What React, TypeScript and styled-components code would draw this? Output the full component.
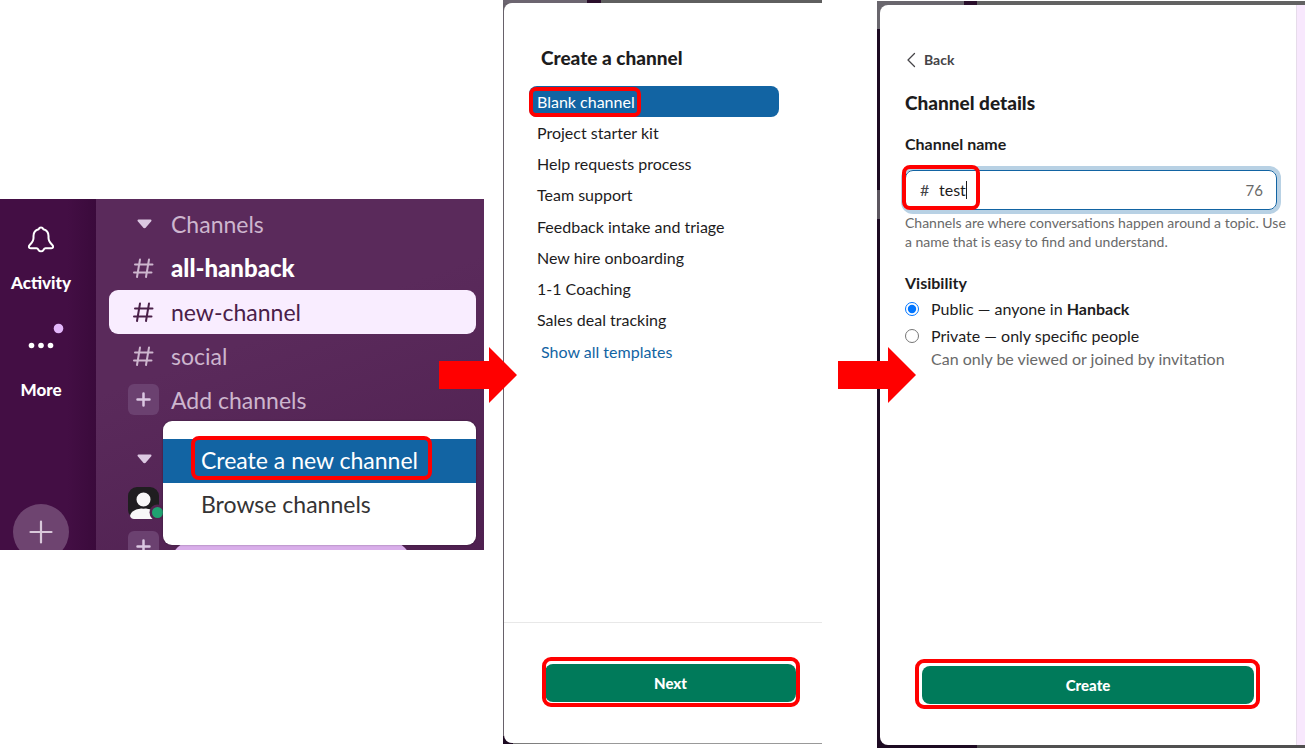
import React from "react";
import styled, { createGlobalStyle, css } from "styled-components";

const GlobalStyle = createGlobalStyle`
  *, *::before, *::after { box-sizing: border-box; }
  body {
    margin: 0;
    background: #fff;
    color: #1d1c1d;
    font-family: Lato, "Liberation Sans", sans-serif;
    font-size: 16px;
    line-height: 22px;
  }
  button, input { font: inherit; color: inherit; }
  button { cursor: pointer; }
  h1, h2, p, ul, fieldset { margin: 0; padding: 0; border: 0; }
  ul { list-style: none; }
`;

const Page = styled.main`
  display: grid;
  grid-template-columns: minmax(0, 484fr) 19px minmax(0, 319fr) 55px minmax(0, 428fr);
  min-height: 100vh;
`;

/* Red annotation frame drawn over a control */
const Callout = styled.span<{ $inset: string; $radius?: number }>`
  position: absolute;
  inset: ${(p) => p.$inset};
  border: 4px solid #f00;
  border-radius: ${(p) => p.$radius ?? 8}px;
  pointer-events: none;
`;

const Connector = styled.div`
  position: relative;
`;

const Arrow = styled.svg<{ $left: number }>`
  position: absolute;
  z-index: 2;
  top: calc(50% - 27px);
  left: ${(p) => p.$left}px;
  width: 78px;
  height: 56px;
`;

const StepArrow = ({ left }: { left: number }) => (
  <Connector>
    <Arrow $left={left} viewBox="0 0 78 56" aria-hidden="true">
      <path d="M0 14H50V0L78 28L50 56V42H0Z" fill="#f00" />
    </Arrow>
  </Connector>
);

/* ---------- Workspace ---------- */

const Workspace = styled.section`
  display: flex;
  align-self: center;
  height: 351px;
  overflow: hidden;
`;

const Rail = styled.nav`
  display: flex;
  flex: none;
  flex-direction: column;
  align-items: center;
  width: 96px;
  padding: 26px 14px 0 0;
  background: linear-gradient(90deg, #430e44 70%, #3a0a3b);
`;

const RailButton = styled.button<{ $gap?: number; $space: number }>`
  display: flex;
  flex-direction: column;
  align-items: center;
  gap: ${(p) => p.$space}px;
  margin-top: ${(p) => p.$gap ?? 0}px;
  padding: 0;
  border: 0;
  background: none;
  color: #fff;
  font-size: 17px;
  font-weight: 900;
`;

const RailIcon = styled.svg`
  display: block;
  width: 38px;
  height: 30px;
  overflow: visible;
`;

const AddButton = styled.button`
  display: flex;
  flex: none;
  align-items: center;
  justify-content: center;
  width: 56px;
  height: 56px;
  margin-top: 103px;
  padding: 0;
  border: 0;
  border-radius: 50%;
  background: #6e4470;
`;

const Sidebar = styled.div`
  flex: 1;
  min-width: 0;
  padding: 3px 8px 0 13px;
  background: linear-gradient(160deg, #5a2a5b 40%, #4f2050);
`;

const SidebarRow = styled.button<{ $active?: boolean; $strong?: boolean }>`
  display: flex;
  align-items: center;
  gap: 12px;
  width: 100%;
  height: 44px;
  padding: 0 19px;
  border: 0;
  border-radius: 9px;
  background: none;
  color: #cdb6ce;
  font-size: 23px;
  line-height: 32px;
  text-align: left;
  white-space: nowrap;
  ${(p) => p.$strong && css`span { color: #fff; font-size: 24px; font-weight: 900; }`}
  ${(p) => p.$active && css`background: #f9edff; color: #4a2049;`}
`;

const RowIcon = styled.svg`
  flex: none;
  width: 31px;
  height: 31px;
`;

const Hash = () => (
  <RowIcon viewBox="0 0 31 31" fill="none" stroke="currentColor" strokeWidth="2" strokeLinecap="round" aria-hidden="true">
    <path d="M12 7.500L9 25M21 7.500L18 25M7 12.500H24.500M6 20.500H23.500" />
  </RowIcon>
);

const CaretDown = () => (
  <RowIcon viewBox="0 0 31 31" aria-hidden="true">
    <path d="M10.500 12.500H22.500L17.300 18.700Q16.500 19.500 15.700 18.700Z" fill="#dcc8e2" stroke="#dcc8e2" strokeWidth="2" strokeLinejoin="round" />
  </RowIcon>
);

const PlusTile = () => (
  <RowIcon viewBox="0 0 31 31" aria-hidden="true">
    <rect width="31" height="31" rx="6" fill="#6b4170" />
    <path d="M15.500 9.500V21.500M9.500 15.500H21.500" stroke="#dcc8e2" strokeWidth="2.500" strokeLinecap="round" />
  </RowIcon>
);

const Avatar = styled.svg`
  flex: none;
  width: 36px;
  height: 32px;
`;

const MenuAnchor = styled.div`
  position: relative;
  margin-bottom: 15px;
`;

const Menu = styled.div`
  position: absolute;
  z-index: 1;
  top: calc(100% - 1px);
  right: 0;
  left: 54px;
  padding: 18px 0;
  border-radius: 9px;
  background: #fff;
  box-shadow: 0 0 2px rgba(0, 0, 0, 0.4);
`;

const MenuItem = styled.button<{ $active?: boolean }>`
  position: relative;
  display: block;
  width: 100%;
  height: 44px;
  padding: 0 38px 2px;
  border: 0;
  background: ${(p) => (p.$active ? "#1264a3" : "#fff")};
  color: ${(p) => (p.$active ? "#fff" : "#343334")};
  font-size: 23px;
  line-height: 32px;
  text-align: left;
  white-space: nowrap;
`;

const UnreadPill = styled.span`
  align-self: flex-start;
  flex: none;
  width: 240px;
  height: 44px;
  margin-top: 16px;
  border-radius: 22px;
  background: #d9aeea;
`;

/* ---------- Dialogs ---------- */

const Backdrop = styled.section<{ $details?: boolean }>`
  display: flex;
  ${(p) =>
    p.$details
      ? css`
          margin-top: 1px;
          padding: 4px 0 3px 3px;
          background:
            linear-gradient(90deg, #69666d 87px, #2a0f2b 87px, #2a0f2b 100px, #626262 100px) top / 100% 4px no-repeat,
            linear-gradient(90deg, #1d0a22 100px, #505050 100px) bottom / 100% 3px no-repeat,
            linear-gradient(#69666d 28px, #1d0a22 28px, #1d0a22 189px, #5c565f 189px, #5c565f 218px, #1d0a22 218px);
        `
      : css`
          margin-bottom: 4px;
          padding: 3px 0 1px 1px;
          background:
            linear-gradient(90deg, #6c6570 84px, #2a0f2b 84px, #2a0f2b 98px, #5f5f5f 98px) top / 100% 3px no-repeat,
            linear-gradient(90deg, #1d0a22 10px, #777 10px, #999 100px) bottom / 100% 8px no-repeat,
            #67616a;
        `}
`;

const Dialog = styled.div<{ $details?: boolean }>`
  display: flex;
  flex: 1;
  flex-direction: column;
  min-width: 0;
  padding-top: ${(p) => (p.$details ? 45 : 43)}px;
  border-radius: 8px 0 0 8px;
  background: #fff;
`;

const Title = styled.h1`
  font-size: 19px;
  font-weight: 900;
  line-height: 24px;
`;

const TemplateArea = styled.div`
  flex: 1;
  padding: 0 43px 0 25px;
  border-bottom: 1px solid #e8e8e8;

  ${Title} { padding-left: 12px; }
`;

const TemplateList = styled.ul`
  display: grid;
  grid-auto-rows: 1fr;
  height: 250px;
  margin-top: 16px;
`;

const Template = styled.button<{ $active?: boolean }>`
  position: relative;
  display: flex;
  align-items: center;
  width: 100%;
  height: 100%;
  padding: 0 8px;
  border: 0;
  border-radius: 8px;
  background: ${(p) => (p.$active ? "#1264a3" : "none")};
  color: ${(p) => (p.$active ? "#fff" : "#1d1c1d")};
  text-align: left;
  white-space: nowrap;
`;

const TemplateLink = styled.a`
  display: inline-block;
  margin: 5px 0 0 12px;
  color: #1264a3;
  text-decoration: none;
`;

const Footer = styled.footer<{ $pad: string }>`
  padding: ${(p) => p.$pad};
`;

const PrimaryButton = styled.button`
  position: relative;
  display: block;
  width: 100%;
  height: 38px;
  padding: 0;
  border: 0;
  border-radius: 8px;
  background: #007a5a;
  color: #fff;
  font-size: 15px;
  font-weight: 900;
`;

const DetailsColumns = styled.div`
  display: flex;
  flex: 1;
  min-width: 0;
`;

const PreviewEdge = styled.div`
  flex: none;
  width: 9px;
  border-left: 1px solid #e6dcea;
  background: #f8e8fd;
`;

const Form = styled.form`
  display: flex;
  flex: 1;
  flex-direction: column;
  align-items: stretch;
  padding: 0 19px 0 25px;
`;

const BackButton = styled.button`
  display: flex;
  align-items: center;
  align-self: flex-start;
  gap: 8px;
  height: 20px;
  margin-bottom: 21px;
  padding: 0 0 0 1px;
  border: 0;
  background: none;
  color: #454447;
  font-size: 14px;
  font-weight: 700;
`;

const FieldLabel = styled.label`
  margin: 18px 0 15px;
  font-weight: 700;
`;

const Field = styled.div`
  position: relative;
  display: flex;
  align-items: center;
  height: 40px;
  padding: 0 13px 0 14px;
  border: 1px solid #1264a3;
  border-radius: 8px;
  box-shadow: 0 0 0 4px #b8d1e4;
`;

const Prefix = styled.span`
  width: 19px;
  color: #454447;
`;

const NameInput = styled.input`
  field-sizing: content;
  padding: 0;
  border: 0;
  outline: 0;
  background: none;
`;

const TextCursor = styled.span`
  width: 1px;
  height: 18px;
  background: #1d1c1d;
`;

const Remaining = styled.span`
  margin-left: auto;
  color: #696969;
  font-size: 15px;
`;

const Hint = styled.p`
  margin: 3px -10px 0 0;
  color: #696969;
  font-size: 14px;
  line-height: 19px;
`;

const Options = styled.fieldset`
  display: grid;
  gap: 5px;
  margin-top: 21px;
`;

const Legend = styled.legend`
  padding: 0 0 4px;
  font-weight: 700;
`;

const Option = styled.label`
  display: flex;
  gap: 12px;

  input {
    flex: none;
    width: 14px;
    height: 14px;
    margin: 4px 0;
    accent-color: #0075ff;
  }
  small {
    display: block;
    color: #696969;
    font-size: 16px;
    line-height: 24px;
  }
`;

const templates = [
  "Blank channel",
  "Project starter kit",
  "Help requests process",
  "Team support",
  "Feedback intake and triage",
  "New hire onboarding",
  "1-1 Coaching",
  "Sales deal tracking",
];

const WorkspaceStep = () => (
  <Workspace>
    <Rail>
      <RailButton $space={17}>
        <RailIcon viewBox="0 0 38 30" fill="none" stroke="#fff" strokeWidth="2" strokeLinecap="round" strokeLinejoin="round" aria-hidden="true">
          <path d="M19 2.500C17.700 2.500 17.100 3.100 16.700 4.200C13.300 5 11.500 7.500 11.500 11V13C11.500 16 9.500 18.200 7.700 20C6.300 21.500 6.700 23.200 8.700 23.200H14.500C15.800 23.200 16 24 16.500 24.900C17.600 26.800 20.400 26.800 21.500 24.900C22 24 22.200 23.200 23.500 23.200H29.300C31.300 23.200 31.700 21.500 30.300 20C28.500 18.200 26.500 16 26.500 13V11C26.500 7.500 24.700 5 21.300 4.200C20.900 3.100 20.300 2.500 19 2.500Z" />
        </RailIcon>
        Activity
      </RailButton>
      <RailButton $gap={28} $space={27}>
        <RailIcon viewBox="0 0 38 30" aria-hidden="true">
          <circle cx="9.500" cy="23.500" r="2.800" fill="#fff" />
          <circle cx="19" cy="23.500" r="2.800" fill="#fff" />
          <circle cx="28.500" cy="23.500" r="2.800" fill="#fff" />
          <circle cx="36.500" cy="6.500" r="4.800" fill="#e3b7fb" />
        </RailIcon>
        <span>More</span>
      </RailButton>
      <AddButton aria-label="Create new">
        <svg width="24" height="24" viewBox="0 0 24 24" stroke="#d9c9da" strokeWidth="2.200" strokeLinecap="round" aria-hidden="true">
          <path d="M12 1.500V22.500M1.500 12H22.500" />
        </svg>
      </AddButton>
    </Rail>
    <Sidebar>
      <SidebarRow><CaretDown /><span>Channels</span></SidebarRow>
      <SidebarRow $strong><Hash /><span>all-hanback</span></SidebarRow>
      <SidebarRow $active><Hash /><span>new-channel</span></SidebarRow>
      <SidebarRow><Hash /><span>social</span></SidebarRow>
      <MenuAnchor>
        <SidebarRow><PlusTile /><span>Add channels</span></SidebarRow>
        <Menu>
          <MenuItem $active>
            Create a new channel
            <Callout $inset="-3px 44px 3px 28px" />
          </MenuItem>
          <MenuItem>Browse channels</MenuItem>
        </Menu>
      </MenuAnchor>
      <SidebarRow aria-label="Direct messages"><CaretDown /></SidebarRow>
      <SidebarRow aria-label="You">
        <Avatar viewBox="0 0 36 32" aria-hidden="true">
          <rect width="31" height="32" rx="9" fill="#1f1e20" />
          <path d="M2 29C3 24 8 21.500 15.500 21.500C23 21.500 28 24 29 29Q28 32 25 32H6Q3 32 2 29Z" fill="#f8f8f8" />
          <circle cx="15.500" cy="12.500" r="8" fill="#f8f8f8" stroke="#1f1e20" strokeWidth="2" />
          <circle cx="29.500" cy="25.500" r="8" fill="#52234f" />
          <circle cx="29.500" cy="25.500" r="5.500" fill="#20a271" />
        </Avatar>
      </SidebarRow>
      <SidebarRow aria-label="Add teammates"><PlusTile /><UnreadPill /></SidebarRow>
    </Sidebar>
  </Workspace>
);

const TemplateStep = () => (
  <Backdrop>
    <Dialog>
      <TemplateArea>
        <Title>Create a channel</Title>
        <TemplateList>
          {templates.map((name, i) => (
            <li key={name}>
              <Template $active={i === 0}>
                {name}
                {i === 0 && <Callout $inset="1px 138px 0 0" $radius={7} />}
              </Template>
            </li>
          ))}
        </TemplateList>
        <TemplateLink href="#templates">Show all templates</TemplateLink>
      </TemplateArea>
      <Footer $pad="41px 26px 41px 41px">
        <PrimaryButton>
          Next
          <Callout $inset="-7px -4px -5px -3px" $radius={9} />
        </PrimaryButton>
      </Footer>
    </Dialog>
  </Backdrop>
);

const DetailsStep = () => (
  <Backdrop $details>
    <DetailsColumns>
      <Dialog $details>
        <Form onSubmit={(e) => e.preventDefault()}>
          <BackButton type="button">
            <svg width="10" height="16" viewBox="0 0 10 16" fill="none" stroke="currentColor" strokeWidth="1.300" strokeLinecap="round" strokeLinejoin="round" aria-hidden="true">
              <path d="M8.500 1.500L2 8L8.500 14.500" />
            </svg>
            Back
          </BackButton>
          <Title as="h2">Channel details</Title>
          <FieldLabel htmlFor="channel-name">Channel name</FieldLabel>
          <Field>
            <Prefix>#</Prefix>
            <NameInput id="channel-name" defaultValue="test" />
            <TextCursor />
            <Remaining>76</Remaining>
            <Callout $inset="-6px 296px -1px -4px" />
          </Field>
          <Hint>
            Channels are where conversations happen around a topic. Use a name that is easy to find and understand.
          </Hint>
          <Options>
            <Legend>Visibility</Legend>
            <Option>
              <input type="radio" name="visibility" defaultChecked />
              <span>Public — anyone in <b>Hanback</b></span>
            </Option>
            <Option>
              <input type="radio" name="visibility" />
              <span>Private — only specific people<small>Can only be viewed or joined by invitation</small></span>
            </Option>
          </Options>
        </Form>
        <Footer $pad="0 42px 41px">
          <PrimaryButton>
            Create
            <Callout $inset="-7px -6px -5px -7px" $radius={9} />
          </PrimaryButton>
        </Footer>
      </Dialog>
      <PreviewEdge />
    </DetailsColumns>
  </Backdrop>
);

export default function App() {
  return (
    <>
      <GlobalStyle />
      <Page>
        <WorkspaceStep />
        <StepArrow left={-45} />
        <TemplateStep />
        <StepArrow left={16} />
        <DetailsStep />
      </Page>
    </>
  );
}
